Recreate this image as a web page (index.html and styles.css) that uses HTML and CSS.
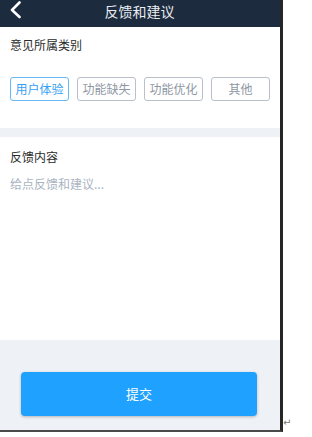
FILE: index.html
```html
<!DOCTYPE html>
<html lang="zh">
<head>
<meta charset="utf-8">
<link rel="stylesheet" href="styles.css">
</head>
<body>
<div class="wrap">
  <div class="phone">
    <header class="bar">
      <svg class="back" width="14" height="18" viewBox="0 0 14 18"><path d="M10.5 1.5 L3 9 L10.5 16" fill="none" stroke="#fff" stroke-width="2.6" stroke-linecap="round" stroke-linejoin="round"/></svg>
      <div class="title">反馈和建议</div>
    </header>
    <section class="cat">
      <div class="label">意见所属类别</div>
      <div class="tags">
        <span class="tag on">用户体验</span>
        <span class="tag">功能缺失</span>
        <span class="tag">功能优化</span>
        <span class="tag">其他</span>
      </div>
    </section>
    <section class="content">
      <div class="label">反馈内容</div>
      <div class="ph">给点反馈和建议...</div>
    </section>
    <div class="foot">
      <div class="submit">提交</div>
    </div>
  </div>
  <span class="ret">↵</span>
</div>
</body>
</html>
```
FILE: styles.css
```css
* { box-sizing: border-box; }
html, body { margin: 0; padding: 0; background: #fff; }
body { font-family: "Noto Sans CJK SC", "Noto Sans", sans-serif; }
.wrap { display: flex; align-items: flex-end; }
.phone {
  width: 283px;
  height: 432px;
  border-right: 3px solid #262626;
  border-bottom: 2px solid #4a4a4a;
  display: flex;
  flex-direction: column;
  background: #eef1f6;
}
.bar {
  height: 27px;
  background: #1d2b3e;
  position: relative;
  display: flex;
  justify-content: center;
  align-items: flex-start;
}
.back { position: absolute; left: 9px; top: 1px; }
.title {
  color: #e9edf2;
  font-size: 14px;
  line-height: 22px;
  margin-left: -1px;
}
.cat { background: #fff; height: 101px; padding: 8px 10px 0; }
.label { font-size: 12px; color: #2b2b2b; line-height: 20px; }
.tags { display: flex; gap: 8px; margin-top: 22px; }
.tag {
  width: 60px;
  height: 24px;
  border: 1px solid #b9c0ca;
  border-radius: 3px;
  font-size: 12px;
  line-height: 22px;
  text-align: center;
  color: #8e97a3;
}
.tag.on { border-color: #66b9f7; color: #37a0f4; }
.content { background: #fff; margin-top: 9px; height: 203px; padding: 10px 10px 0; }
.ph { font-size: 12px; color: #a9b4c1; line-height: 20px; margin-top: 7px; }
.foot { flex: 1; padding: 32px 23px 0 21px; }
.submit {
  height: 44px;
  background: #1ea1ff;
  border-radius: 4px;
  box-shadow: 0 1px 3px rgba(0,0,0,0.25);
  color: #fff;
  font-size: 13px;
  line-height: 44px;
  text-align: center;
}
.ret { font-size: 10px; color: #777; line-height: 12px; margin-bottom: 3px; font-family: "DejaVu Sans", sans-serif; }
```
